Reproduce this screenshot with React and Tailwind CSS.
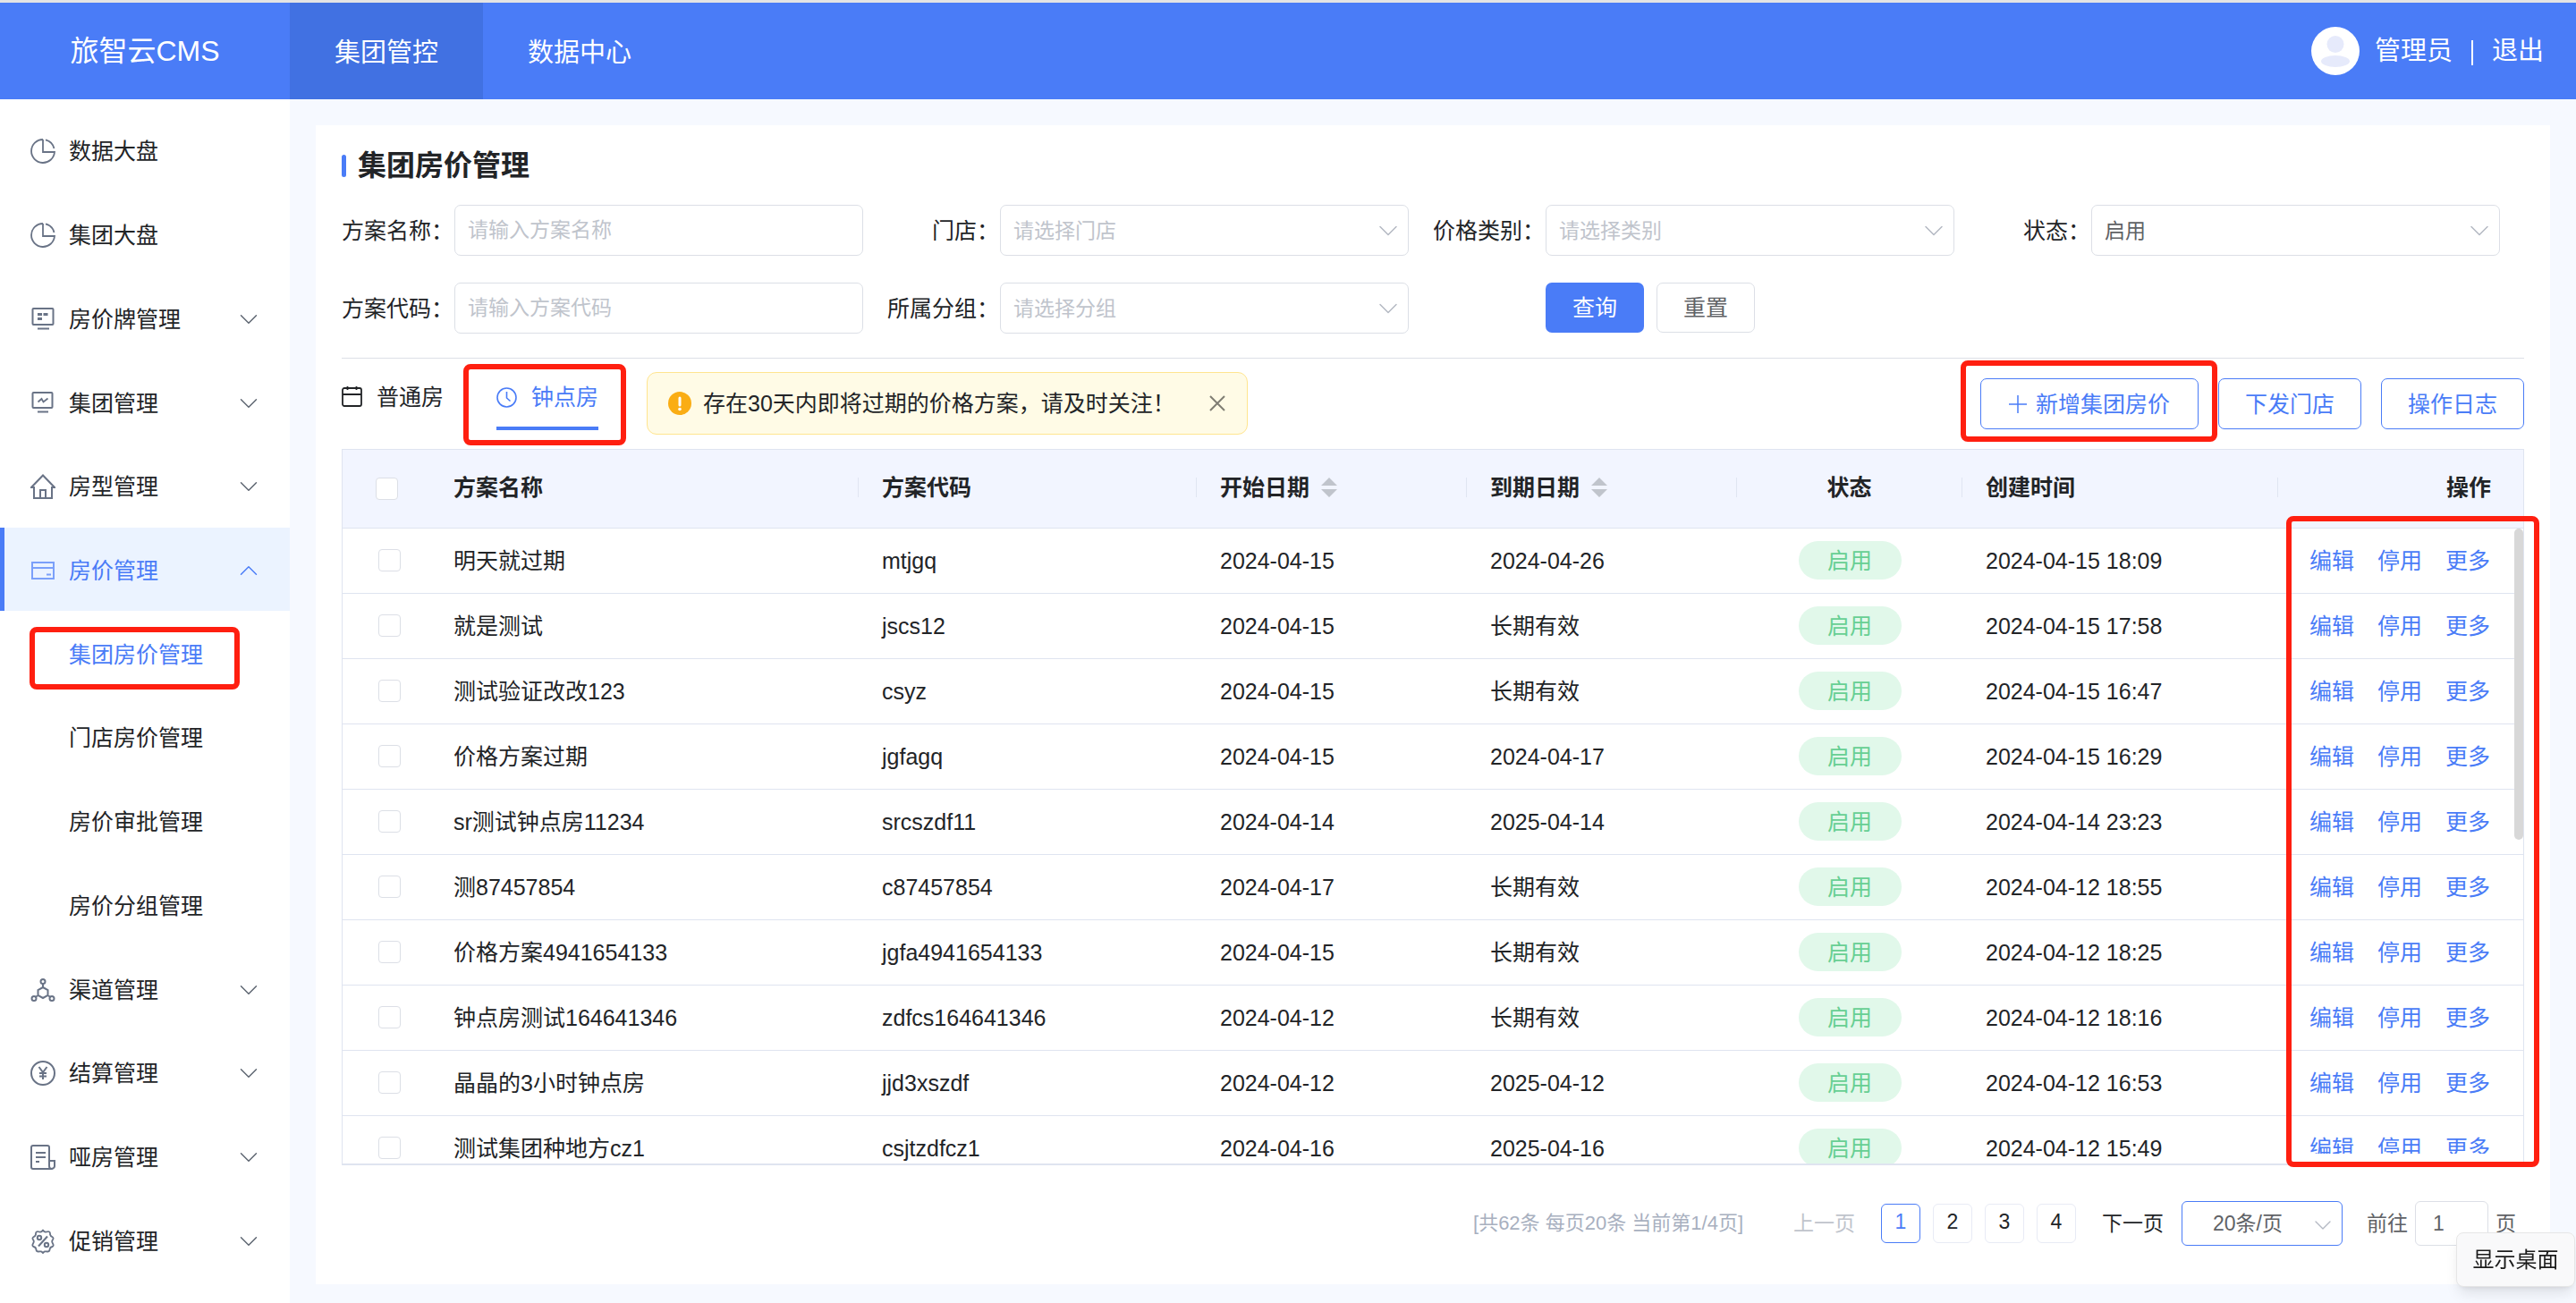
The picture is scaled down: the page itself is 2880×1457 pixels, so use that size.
import React, { useState } from 'react';
import { ChevronDown, ChevronUp } from 'lucide-react';

const iconProps = {
  width: 28,
  height: 28,
  viewBox: '0 0 28 28',
  fill: 'none',
  stroke: 'currentColor',
  strokeWidth: 2,
};

const PieIcon = () => (
  <svg {...iconProps} strokeWidth="1.800">
    <path d="M14 1A13 13 0 1 0 27 15H14V1" />
    <path d="M17 1.300A13 13 0 0 1 26.500 11" />
  </svg>
);

const BoardIcon = () => (
  <svg {...iconProps}>
    <rect x="2.500" y="2" width="23" height="18" rx="1" />
    <path d="M8 8.500h5M14.500 8.500h5M8 13.500h5" strokeWidth="3" />
    <path d="M8 24.500h13" />
  </svg>
);

const MonitorIcon = () => (
  <svg {...iconProps}>
    <rect x="2.500" y="2" width="22" height="17" rx="1" />
    <path d="M8.500 12.500l4-3.500 2 3.500 5-4" strokeWidth="1.800" />
    <path d="M8 23.500h12" />
  </svg>
);

const HouseIcon = () => (
  <svg {...iconProps}>
    <path d="M4 15H1L14 1.500 27 15h-3v12H4z" />
    <path d="M11 27v-9h6v9" />
  </svg>
);

const CardIcon = () => (
  <svg {...iconProps}>
    <rect x="2" y="5" width="24" height="18" />
    <path d="M2 11h24M18 18.500h5" />
  </svg>
);

const NodesIcon = () => (
  <svg {...iconProps}>
    <path d="M14 11l5.500 3v6L14 23l-5.500-3v-6zM14 7v4M8.500 20l-3 2M19.500 20l3 2" />
    <circle cx="14" cy="4.500" r="2.500" />
    <circle cx="4" cy="23.500" r="2.500" />
    <circle cx="24" cy="23.500" r="2.500" />
  </svg>
);

const YuanIcon = () => (
  <svg {...iconProps}>
    <circle cx="14" cy="14" r="13" />
    <path d="M9.500 7l4.500 6 4.500-6M14 13v8M10 14h8M10 17.500h8" />
  </svg>
);

const BillIcon = () => (
  <svg {...iconProps}>
    <path d="M21 18V3q0-2-2-2H3Q1 1 1 3v22q0 2 2 2h21q3-1 3-3v-6h-6v6q0 3 3 3" />
    <path d="M6 9h11M6 14h11M6 19h4" />
  </svg>
);

const PercentIcon = () => (
  <svg {...iconProps}>
    <path
      d="M14 1.500q1.500 2.500 3.700 2 3.500-1 4 .500t.300 2.500q.500 2 3 3 1.300 1.500-.500 3.500-.800 1.500.500 3.500 1.500 2.500-.500 3.500-2.500.500-2.800 2.500-.200 3-2 3-2-.300-3.500-.200-1.200.700-2.200 1.700-1-1-2.200-1.700-1.500-.100-3.500.200-1.800 0-2-3-.300-2-2.800-2.500-2-1-.500-3.500 1.300-2 .500-3.500-1.800-2-.500-3.500 2.500-1 3-3-.200-1 .300-2.500t4-.500q2.200.500 3.700-2z"
      strokeLinejoin="round"
      strokeWidth="1.800"
    />
    <path d="M19 8.500l-10 11" />
    <circle cx="10" cy="10" r="2.200" />
    <circle cx="18" cy="18" r="2.200" />
  </svg>
);

const menu = [
  { label: '数据大盘', icon: PieIcon },
  { label: '集团大盘', icon: PieIcon },
  { label: '房价牌管理', icon: BoardIcon, expandable: true },
  { label: '集团管理', icon: MonitorIcon, expandable: true },
  { label: '房型管理', icon: HouseIcon, expandable: true },
  {
    label: '房价管理',
    icon: CardIcon,
    expandable: true,
    open: true,
    children: ['集团房价管理', '门店房价管理', '房价审批管理', '房价分组管理'],
  },
  { label: '渠道管理', icon: NodesIcon, expandable: true },
  { label: '结算管理', icon: YuanIcon, expandable: true },
  { label: '哑房管理', icon: BillIcon, expandable: true },
  { label: '促销管理', icon: PercentIcon, expandable: true },
];

const plans = [
  ['明天就过期', 'mtjgq', '2024-04-15', '2024-04-26', '2024-04-15 18:09'],
  ['就是测试', 'jscs12', '2024-04-15', '长期有效', '2024-04-15 17:58'],
  ['测试验证改改123', 'csyz', '2024-04-15', '长期有效', '2024-04-15 16:47'],
  ['价格方案过期', 'jgfagq', '2024-04-15', '2024-04-17', '2024-04-15 16:29'],
  ['sr测试钟点房11234', 'srcszdf11', '2024-04-14', '2025-04-14', '2024-04-14 23:23'],
  ['测87457854', 'c87457854', '2024-04-17', '长期有效', '2024-04-12 18:55'],
  ['价格方案4941654133', 'jgfa4941654133', '2024-04-15', '长期有效', '2024-04-12 18:25'],
  ['钟点房测试164641346', 'zdfcs164641346', '2024-04-12', '长期有效', '2024-04-12 18:16'],
  ['晶晶的3小时钟点房', 'jjd3xszdf', '2024-04-12', '2025-04-12', '2024-04-12 16:53'],
  ['测试集团种地方cz1', 'csjtzdfcz1', '2024-04-16', '2025-04-16', '2024-04-12 15:49'],
];

// Red frame laid over the element it is nested in
const Mark = ({ className }) => (
  <div className={`pointer-events-none absolute z-20 rounded-lg border-6 border-[#ff1f10] ${className}`} />
);

const MenuEntry = ({ item }) => {
  const Icon = item.icon;
  const Arrow = item.open ? ChevronUp : ChevronDown;
  return (
    <>
      <a
        href="#"
        className={`flex flex-1 items-center border-l-5 pt-[3px] pr-[29px] pl-[29px] ${
          item.open ? 'border-[#4a7cf7] bg-[#ebf3ff] text-[#4a7cf7]' : 'border-transparent'
        }`}
      >
        <span className={item.open ? 'text-[#7ba0fa]' : 'text-[#697386]'}>
          <Icon />
        </span>
        <span className="ml-[15px] flex-1">{item.label}</span>
        {item.expandable && (
          <Arrow size={34} strokeWidth={1} className={item.open ? 'text-[#4a7cf7]' : 'text-[#5c6470]'} />
        )}
      </a>
      {item.children?.map((child, i) => (
        <a
          key={child}
          href="#"
          className={`relative flex flex-1 items-center pt-[3px] pl-[77px] ${i === 0 ? 'text-[#4a7cf7]' : ''}`}
        >
          {child}
          {i === 0 && <Mark className="top-[18px] left-[33px] h-[70px] w-[235px]" />}
        </a>
      ))}
    </>
  );
};

const Field = ({ id, label, children }) => (
  <div className="flex items-center pr-[27px]">
    <label htmlFor={id} className="w-[126px] shrink-0 pr-px text-right whitespace-nowrap">
      {label}：
    </label>
    <div className="relative flex-1">{children}</div>
  </div>
);

const fieldClass =
  'h-[57px] w-full appearance-none rounded-[7px] border border-[#dcdfe6] bg-white px-[14px] text-[23px] placeholder:text-[#c0c4cc]';

const SelectField = ({ id, label, value, muted }) => (
  <Field id={id} label={label}>
    <select id={id} className={`${fieldClass} ${muted ? 'text-[#c0c4cc]' : 'text-[#606266]'}`}>
      <option>{value}</option>
    </select>
    <ChevronDown size={36} strokeWidth={1} className="pointer-events-none absolute top-[11px] right-[5px] text-[#b4b9c3]" />
  </Field>
);

const CheckBox = ({ label }) => (
  <input
    type="checkbox"
    aria-label={label}
    className="block size-[25px] appearance-none rounded-[4px] border border-[#dcdfe6] bg-white"
  />
);

const SortCarets = () => (
  <svg width="18" height="22" viewBox="0 0 18 22" fill="#c0c4cc">
    <path d="M9 0l9 9H0zM9 22l9-9H0z" />
  </svg>
);

const HeadCell = ({ children, className = '', line = true }) => (
  <th className="p-0 pb-[2px] font-bold">
    <div className={`flex h-[22px] items-center px-[26px] ${line ? 'border-r border-[#e0e5f2]' : ''} ${className}`}>
      {children}
    </div>
  </th>
);

const outlineButton =
  'flex h-[57px] items-center justify-center rounded-[7px] border border-[#4a7cf7] bg-white px-[29px] text-[#4a7cf7]';

const App = () => {
  const [page, setPage] = useState(1);
  const [showAlert, setShowAlert] = useState(true);

  return (
    <div className="flex h-screen flex-col overflow-hidden bg-[#f6f9ff] font-['Liberation_Sans','Noto_Sans_CJK_SC',sans-serif] text-[25px] leading-[36px] text-[#222427]">
      {/* Header */}
      <header className="flex h-[111px] shrink-0 border-t-3 border-[#e4e4e4] bg-[#4a7cf7] text-[29px] text-white">
        <div className="flex w-[324px] items-center justify-center text-[32px]">旅智云CMS</div>
        <nav className="flex">
          <a href="#" className="flex w-[216px] items-center justify-center bg-[#4171e2] pt-[3px]">集团管控</a>
          <a href="#" className="flex w-[216px] items-center justify-center pt-[3px]">数据中心</a>
        </nav>
        <div className="ml-auto flex items-center pr-9">
          <svg width="54" height="54" viewBox="0 0 54 54">
            <circle cx="27" cy="27" r="27" fill="#fff" />
            <circle cx="27" cy="19.500" r="9.500" fill="#e6eafb" />
            <ellipse cx="27" cy="38.500" rx="16" ry="6.500" fill="#e6eafb" />
          </svg>
          <span className="ml-[17px]">管理员</span>
          <span className="mx-[21px] mt-1 h-7 w-0.5 bg-white" />
          <a href="#">退出</a>
        </div>
      </header>

      <div className="flex min-h-0 flex-1">
        {/* Sidebar */}
        <nav className="flex w-[324px] shrink-0 flex-col bg-white pt-[10px] pb-6">
          {menu.map((item) => (
            <MenuEntry key={item.label} item={item} />
          ))}
        </nav>

        <main className="flex min-w-0 flex-1 px-[29px] pt-[29px] pb-[21px]">
          <div className="flex min-w-0 flex-1 flex-col bg-white px-[29px]">
            <h1 className="mt-6 flex h-[42px] items-center text-[32px] font-bold">
              <span className="mr-[13px] h-[25px] w-[5px] rounded-full bg-[#4a7cf7]" />
              集团房价管理
            </h1>

            {/* Search form */}
            <form className="mt-[23px] grid grid-cols-4 gap-y-[30px] border-b border-[#dcdfe6] pb-[27px]">
              <Field id="plan-name" label="方案名称">
                <input id="plan-name" className={fieldClass} placeholder="请输入方案名称" />
              </Field>
              <SelectField id="store" label="门店" value="请选择门店" muted />
              <SelectField id="category" label="价格类别" value="请选择类别" muted />
              <SelectField id="status" label="状态" value="启用" />
              <Field id="plan-code" label="方案代码">
                <input id="plan-code" className={fieldClass} placeholder="请输入方案代码" />
              </Field>
              <SelectField id="group" label="所属分组" value="请选择分组" muted />
              <div className="flex gap-[14px] pl-[126px]">
                <button type="button" className="h-14 w-[110px] rounded-[7px] bg-[#4a7cf7] text-white">查询</button>
                <button type="button" className="h-14 w-[110px] rounded-[7px] border border-[#dcdfe6] text-[#606266]">重置</button>
              </div>
            </form>

            {/* Tabs and actions */}
            <div className="flex h-[101px] shrink-0 items-start pt-[15px]">
              <button type="button" className="mt-[10px] flex items-center gap-4">
                <svg width="23" height="24" viewBox="0 0 23 24" fill="none" stroke="currentColor" strokeWidth="1.800">
                  <rect x="1" y="2" width="21" height="20" rx="2" />
                  <path d="M1 9h21M6.500 0v4M16.500 0v4" />
                </svg>
                普通房
              </button>
              <button
                type="button"
                className="relative mt-[10px] ml-[59px] flex h-[55px] items-start border-b-4 border-[#4a7cf7] text-[#4a7cf7]"
              >
                <span className="flex items-center gap-4">
                  <svg width="23" height="23" viewBox="0 0 23 23" fill="none" stroke="currentColor" strokeWidth="1.600">
                    <circle cx="11.500" cy="11.500" r="10.500" />
                    <path d="M11.500 5v7l4 3.500" />
                  </svg>
                  钟点房
                </span>
                <Mark className="-top-[19px] -left-[37px] h-[91px] w-[182px]" />
              </button>
              {showAlert && (
                <div className="ml-[54px] flex h-[70px] w-[672px] items-center rounded-[11px] border border-[#ffe58f] bg-[#fffbe6] pr-6 pl-[23px]">
                  <svg width="26" height="26" viewBox="0 0 26 26">
                    <circle cx="13" cy="13" r="13" fill="#faad14" />
                    <path d="M13 7v8" stroke="#fff" strokeWidth="3" strokeLinecap="round" />
                    <circle cx="13" cy="19.500" r="1.800" fill="#fff" />
                  </svg>
                  <span className="ml-[13px] flex-1 whitespace-nowrap">存在30天内即将过期的价格方案，请及时关注！</span>
                  <button type="button" aria-label="关闭" onClick={() => setShowAlert(false)}>
                    <svg width="18" height="18" viewBox="0 0 18 18" stroke="#7f7d73" strokeWidth="2">
                      <path d="M1 1l16 16M17 1L1 17" />
                    </svg>
                  </button>
                </div>
              )}
              <div className="mt-[7px] ml-auto flex gap-[22px]">
                <div className="relative">
                  <button type="button" className={`${outlineButton} w-[244px] gap-[10px]`}>
                    <svg width="20" height="20" viewBox="0 0 20 20" stroke="currentColor" strokeWidth="1.500">
                      <path d="M10 0v20M0 10h20" />
                    </svg>
                    新增集团房价
                  </button>
                  <Mark className="-top-5 -left-[22px] h-[91px] w-[287px]" />
                </div>
                <button type="button" className={outlineButton}>下发门店</button>
                <button type="button" className={outlineButton}>操作日志</button>
              </div>
            </div>

            {/* Plan table */}
            <div className="relative min-h-0 flex-1">
              <div className="h-full overflow-hidden border border-b-2 border-[#dfe4f0]">
                <table className="w-full table-fixed border-collapse text-left">
                  <colgroup>
                    <col className="w-[98px]" />
                    <col />
                    <col className="w-[378px]" />
                    <col className="w-[302px]" />
                    <col className="w-[302px]" />
                    <col className="w-[252px]" />
                    <col className="w-[353px]" />
                    <col className="w-[274px]" />
                  </colgroup>
                  <thead>
                    <tr className="h-[87px] border-b border-[#dfe4f0] bg-[#f2f5ff]">
                      <th className="p-0 pl-[37px]">
                        <CheckBox label="全选" />
                      </th>
                      <HeadCell>方案名称</HeadCell>
                      <HeadCell>方案代码</HeadCell>
                      <HeadCell className="gap-[13px]">开始日期 <SortCarets /></HeadCell>
                      <HeadCell className="gap-[13px]">到期日期 <SortCarets /></HeadCell>
                      <HeadCell className="justify-center">状态</HeadCell>
                      <HeadCell>创建时间</HeadCell>
                      <HeadCell className="justify-end pr-[36px]" line={false}>操作</HeadCell>
                    </tr>
                  </thead>
                  <tbody>
                    {plans.map(([name, code, start, end, created], i) => (
                      <tr key={code} className="h-[73px] border-b border-[#dfe4f0]">
                        <td className="p-0 pl-10">
                          <CheckBox label={name} />
                        </td>
                        <td className="px-[26px] py-0">{name}</td>
                        <td className="px-[26px] py-0">{code}</td>
                        <td className="px-[26px] py-0">{start}</td>
                        <td className="px-[26px] py-0">{end}</td>
                        <td className="p-0">
                          <span className="mx-auto flex h-[43px] w-[115px] items-center justify-center rounded-full bg-[#e1f8ea] text-[#67cf93]">
                            启用
                          </span>
                        </td>
                        <td className="px-[26px] py-0">{created}</td>
                        <td className="p-0 align-top">
                          <div className={i === plans.length - 1 ? 'h-[42px] overflow-hidden' : ''}>
                            <div className="flex h-[72px] items-center justify-end gap-[26px] pr-[37px] text-[#4a7cf7]">
                              <a href="#">编辑</a>
                              <a href="#">停用</a>
                              <a href="#">更多</a>
                            </div>
                          </div>
                        </td>
                      </tr>
                    ))}
                  </tbody>
                </table>
              </div>
              <div className="absolute top-[89px] right-px h-[348px] w-[10px] rounded-full bg-[#d8d8d8]" />
              <Mark className="top-[75px] -right-[17px] -bottom-[2px] w-[283px]" />
            </div>

            {/* Pagination */}
            <div className="flex h-[133px] shrink-0 items-center justify-end pr-[9px] pb-[3px] text-[23px] text-[#606266]">
              <span className="mr-14 text-[22px] text-[#a8b0bf]">[共62条 每页20条 当前第1/4页]</span>
              <button type="button" className="text-[#c0c4cc]">上一页</button>
              <div className="mx-[29px] flex gap-[14px]">
                {[1, 2, 3, 4].map((n) => (
                  <button
                    key={n}
                    type="button"
                    onClick={() => setPage(n)}
                    className={`size-11 rounded-[6px] border pb-1 ${
                      n === page ? 'border-[#4a7cf7] text-[#4a7cf7]' : 'border-[#e8ebf5] text-[#222427]'
                    }`}
                  >
                    {n}
                  </button>
                ))}
              </div>
              <button type="button" className="text-[#222427]">下一页</button>
              <div className="relative ml-5">
                <select aria-label="每页条数" className="h-[50px] w-[180px] appearance-none rounded-[6px] border border-[#4a7cf7] bg-white pl-[34px]">
                  <option>20条/页</option>
                </select>
                <ChevronDown size={32} strokeWidth={1} className="pointer-events-none absolute top-[11px] right-[6px] text-[#b4b9c3]" />
              </div>
              <label htmlFor="jump" className="ml-[27px]">前往</label>
              <input id="jump" defaultValue="1" className="mx-2 h-[50px] w-[82px] rounded-[6px] border border-[#dcdfe6] pl-[19px]" />
              <span>页</span>
            </div>
          </div>
        </main>
      </div>

      <div role="tooltip" className="fixed right-px bottom-[18px] z-30 flex h-[61px] w-[133px] items-center justify-center rounded-lg border border-[#e6e6e6] bg-[#f9f9fa] text-[24px] text-[#1b1b1b] shadow-lg">
        显示桌面
      </div>
    </div>
  );
};

export default App;
